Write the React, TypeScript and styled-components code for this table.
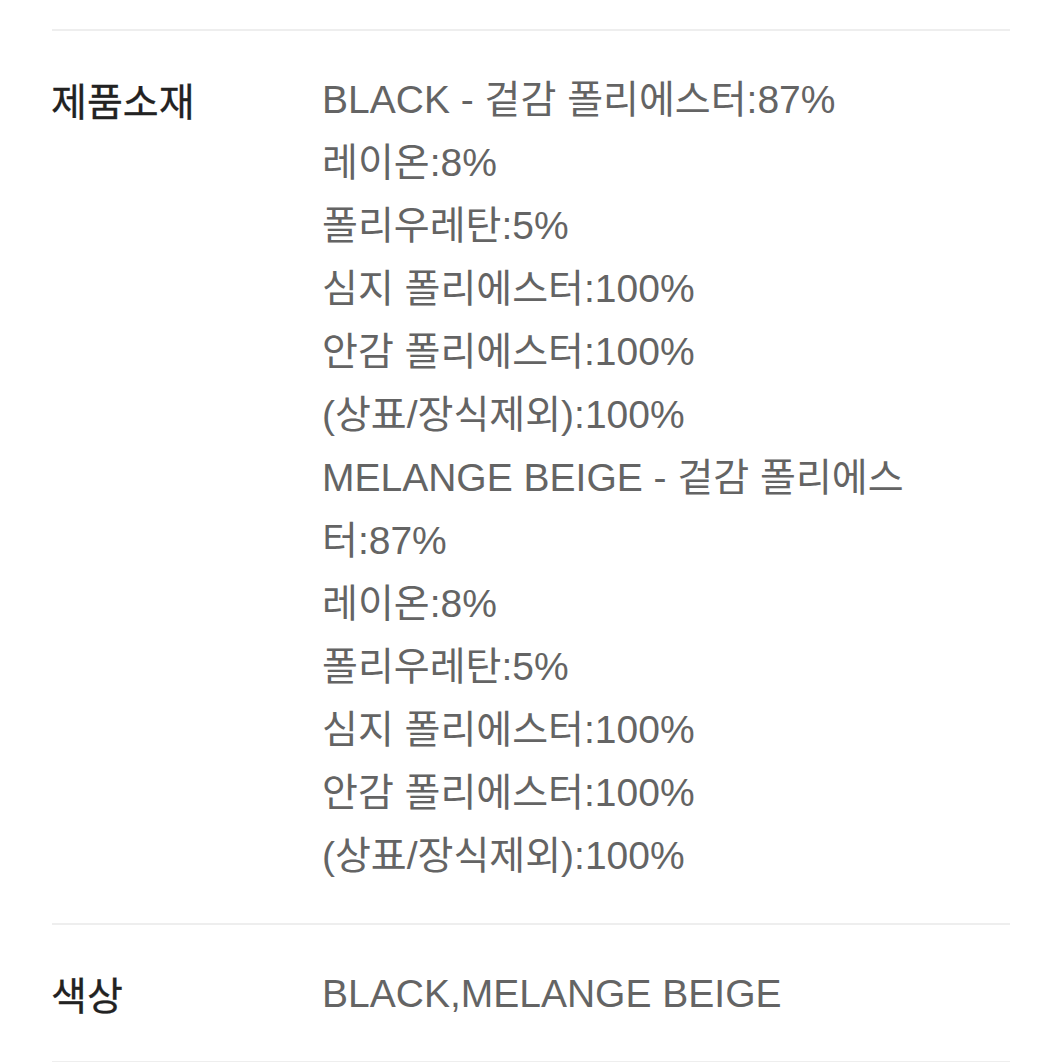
import React from "react";
import styled, { createGlobalStyle } from "styled-components";

const Global = createGlobalStyle`
  html, body { margin: 0; padding: 0; background: #ffffff; }
  body { font-family: "Liberation Sans", "Noto Sans CJK KR", sans-serif; }
`;

const Page = styled.div`
  padding: 29px 52px 0 52px;
  width: 958px;
`;

const Table = styled.div`
  display: flex;
  flex-direction: column;
`;

const Row = styled.div`
  display: grid;
  grid-template-columns: 270px 1fr;
  padding: 37px 0 36px;
  border-top: 2px solid #eeeeee;
  &:last-child {
    border-bottom: 2px solid #eeeeee;
  }
`;

const Label = styled.div`
  font-family: "Noto Sans CJK KR", "Liberation Sans", sans-serif;
  font-size: 39px;
  line-height: 63px;
  color: #222222;
  font-weight: 400;
  -webkit-text-stroke: 0.3px #222222;
  margin-left: -1px;
`;

const Value = styled.div`
  display: flex;
  flex-direction: column;
  font-size: 39px;
  line-height: 63px;
  color: #646464;
`;

const Line = styled.span`
  white-space: nowrap;
`;

const material = [
  "BLACK - 겉감 폴리에스터:87%",
  "레이온:8%",
  "폴리우레탄:5%",
  "심지 폴리에스터:100%",
  "안감 폴리에스터:100%",
  "(상표/장식제외):100%",
  "MELANGE BEIGE - 겉감 폴리에스",
  "터:87%",
  "레이온:8%",
  "폴리우레탄:5%",
  "심지 폴리에스터:100%",
  "안감 폴리에스터:100%",
  "(상표/장식제외):100%",
];

export default function App() {
  return (
    <>
      <Global />
      <Page>
        <Table>
          <Row>
            <Label>제품소재</Label>
            <Value>
              {material.map((l, i) => (
                <Line key={i}>{l}</Line>
              ))}
            </Value>
          </Row>
          <Row>
            <Label>색상</Label>
            <Value>
              <Line>BLACK,MELANGE BEIGE</Line>
            </Value>
          </Row>
        </Table>
      </Page>
    </>
  );
}
